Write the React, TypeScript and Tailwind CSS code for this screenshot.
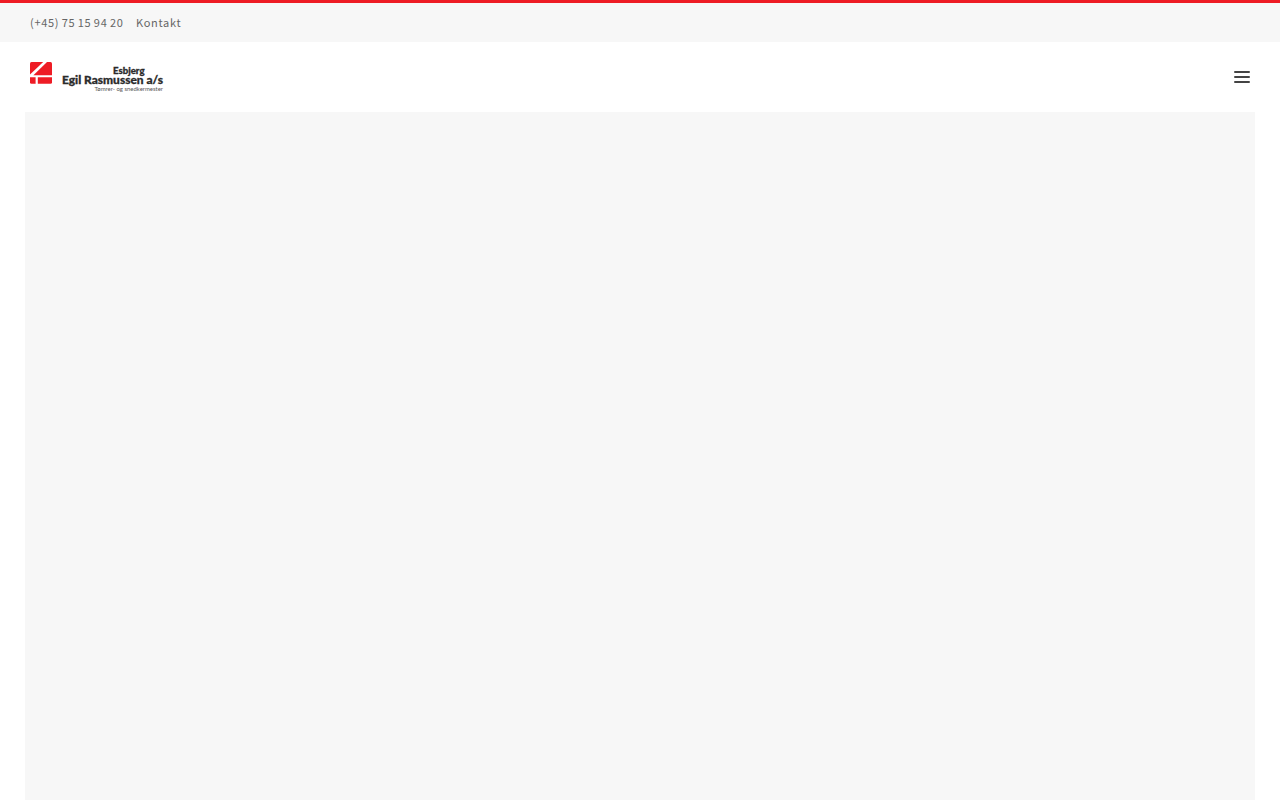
const PHONE = '(+45) 75 15 94 20';

function Logo() {
  return (
    <svg width="138" height="32" viewBox="0 0 138 32" className="block overflow-visible" aria-label="Egil Rasmussen a/s">
      <g fill="#ee1c25">
        <path d="M1.5 0H13.2L0 12.6V1.5Q0 0 1.5 0Z" />
        <path d="M17 0H20.5Q22 0 22 1.5V13.2H3.4Z" />
        <path d="M0 15.2H5.6V21.8H1.5Q0 21.8 0 20.3Z" />
        <path d="M7.8 15.2H22V20.3Q22 21.8 20.5 21.8H7.8Z" />
      </g>
      <g fontFamily="Lato, 'Liberation Sans', sans-serif" fill="#2b2b2b">
        <g fontWeight="900" stroke="#2b2b2b" strokeWidth="0.3">
          <text x="83" y="11.8" fontSize="9.4" textLength="31.5" lengthAdjust="spacingAndGlyphs">Esbjerg</text>
          <text x="32" y="21.8" fontSize="12" textLength="101" lengthAdjust="spacingAndGlyphs">Egil Rasmussen a/s</text>
        </g>
        <text x="64.5" y="29" fontSize="6" fill="#555" textLength="68.5" lengthAdjust="spacingAndGlyphs">Tømrer- og snedkermester</text>
      </g>
    </svg>
  );
}

function TopBar() {
  return (
    <div className="h-[42px] border-t-[3px] border-[#ee1c25] bg-[#f7f7f7] px-[30px] flex items-center gap-3 text-[11px] leading-none tracking-[0.7px] text-[#666]">
      <a href="tel:+4575159420" className="w-[94px] whitespace-nowrap [word-spacing:-0.7px]">{PHONE}</a>
      <a href="#kontakt">Kontakt</a>
    </div>
  );
}

function Header() {
  return (
    <header className="h-[70px] px-[30px] flex items-center justify-between bg-white">
      <a href="#" className="pt-[2px]">
        <Logo />
      </a>
      <button type="button" aria-label="Menu" className="flex flex-col gap-[3px] cursor-pointer">
        <span className="block w-4 h-[2px] rounded-[1px] bg-[#444]" />
        <span className="block w-4 h-[2px] rounded-[1px] bg-[#444]" />
        <span className="block w-4 h-[2px] rounded-[1px] bg-[#444]" />
      </button>
    </header>
  );
}

export default function App() {
  return (
    <div className="h-screen overflow-hidden flex flex-col bg-white font-['Noto_Sans_CJK_SC',sans-serif]">
      <TopBar />
      <Header />
      <main className="flex-1 mx-[25px] bg-[#f7f7f7]" />
    </div>
  );
}
